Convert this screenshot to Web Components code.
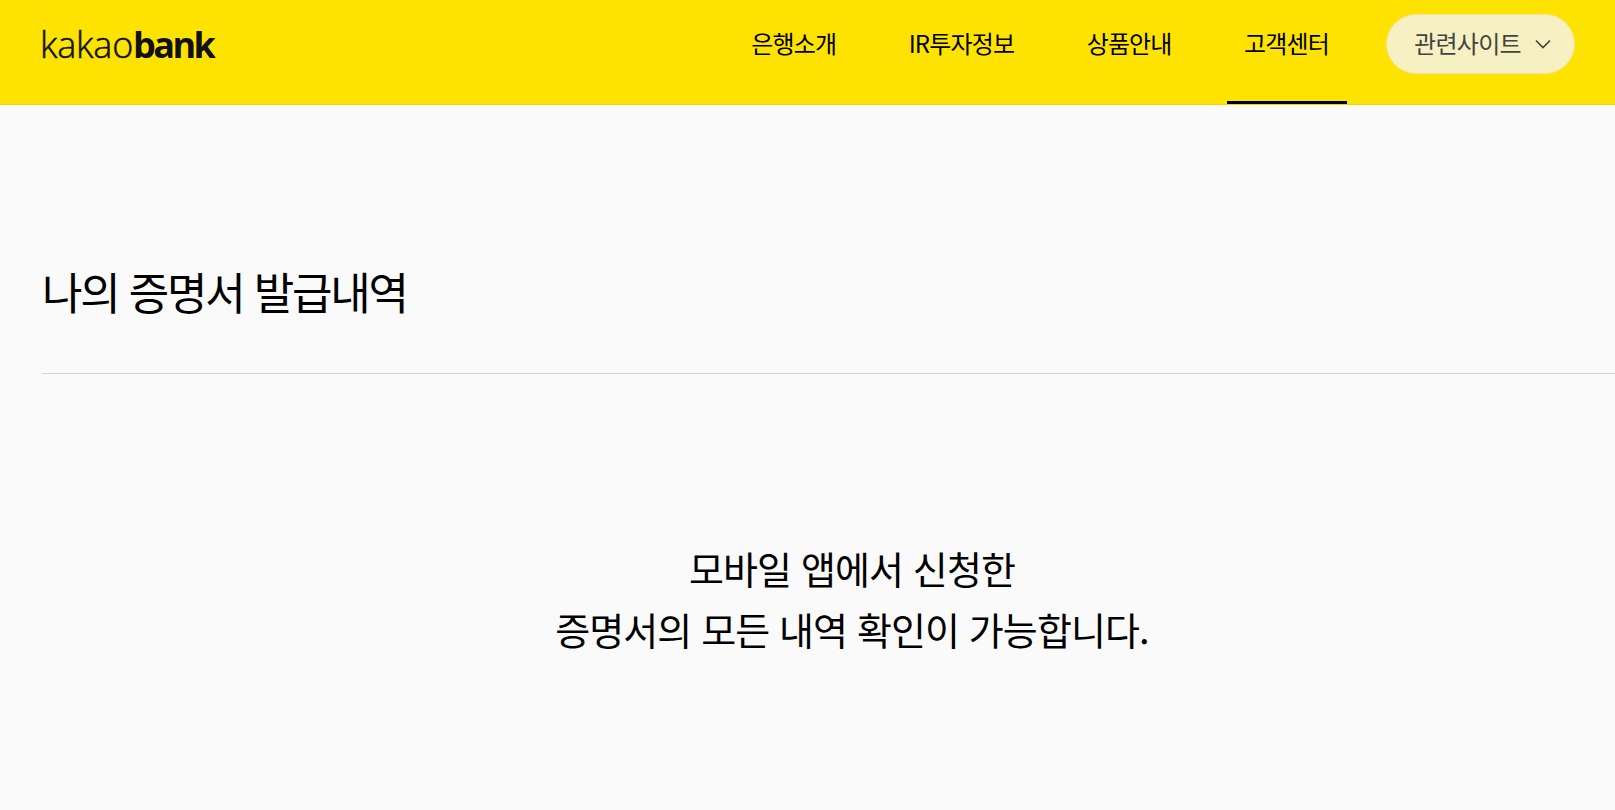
<!DOCTYPE html>
<html lang="ko">
<head>
<meta charset="utf-8">
<title>나의 증명서 발급내역</title>
<style>
  html, body { margin: 0; height: 100%; background: #fafafa; overflow: hidden; }
  body { font-family: "Noto Sans CJK KR", "Noto Sans", sans-serif; color: #000; }
</style>
</head>
<body>
<kb-header>
  <kb-nav-item>은행소개</kb-nav-item>
  <kb-nav-item>IR투자정보</kb-nav-item>
  <kb-nav-item>상품안내</kb-nav-item>
  <kb-nav-item active>고객센터</kb-nav-item>
  <kb-site-select>관련사이트</kb-site-select>
</kb-header>
<kb-page title="나의 증명서 발급내역">
  <kb-empty>
    <span>모바일 앱에서 신청한</span>
    <span>증명서의 모든 내역 확인이 가능합니다.</span>
  </kb-empty>
</kb-page>

<script>
  class KbHeader extends HTMLElement {
    constructor() {
      super();
      this.attachShadow({ mode: "open" });
      this.shadowRoot.innerHTML = `
        <style>
          :host {
            display: flex;
            align-items: flex-start;
            justify-content: space-between;
            box-sizing: border-box;
            height: 105px;
            padding: 0 40px 0 40px;
            background: #ffe300;
            border-bottom: 1px solid #eed600;
          }
          .logo {
            font-family: "Open Sans", sans-serif;
            font-size: 36px;
            line-height: 40px;
            letter-spacing: -0.2px;
            color: #111;
            font-weight: 300;
            -webkit-text-stroke: 0.5px #111;
            margin-top: 25px;
          }
          .logo b { font-weight: 700; letter-spacing: -2.6px; -webkit-text-stroke: 0; }
          nav { display: flex; align-items: flex-start; height: 104px; }
          ::slotted(kb-nav-item) { margin-right: 37.5px; }
          ::slotted(kb-nav-item:nth-last-child(2)) { margin-right: 39px; }
        </style>
        <div class="logo">kakao<b>bank</b></div>
        <nav><slot></slot></nav>
      `;
    }
  }
  customElements.define("kb-header", KbHeader);

  class KbNavItem extends HTMLElement {
    constructor() {
      super();
      this.attachShadow({ mode: "open" });
      this.shadowRoot.innerHTML = `
        <style>
          :host {
            display: flex;
            align-items: center;
            box-sizing: border-box;
            height: 104px;
            padding: 0 18px 16px 17px;
            font-size: 24px;
            letter-spacing: -0.85px;
            color: #000;
            border-bottom: 3px solid transparent;
          }
          :host([active]) { border-bottom-color: #000; }
        </style>
        <slot></slot>
      `;
    }
  }
  customElements.define("kb-nav-item", KbNavItem);

  class KbSiteSelect extends HTMLElement {
    constructor() {
      super();
      this.attachShadow({ mode: "open" });
      this.shadowRoot.innerHTML = `
        <style>
          :host {
            display: flex;
            align-items: center;
            justify-content: space-between;
            box-sizing: border-box;
            width: 189px;
            height: 60px;
            margin-top: 14px;
            padding: 0 23px 0 27px;
            border-radius: 30px;
            background: #f7f0c2;
            border: 1px solid #f0e6a0;
            font-size: 24px;
            letter-spacing: -0.7px;
            color: #444;
          }
          span { margin-top: -3px; }
          svg { display: block; }
        </style>
        <span><slot></slot></span>
        <svg width="16" height="10" viewBox="0 0 16 10" fill="none" stroke="#444" stroke-width="1.6">
          <path d="M1 1.5l7 7 7-7"/>
        </svg>
      `;
    }
  }
  customElements.define("kb-site-select", KbSiteSelect);

  class KbPage extends HTMLElement {
    constructor() {
      super();
      this.attachShadow({ mode: "open" });
      this.shadowRoot.innerHTML = `
        <style>
          :host { display: block; padding-left: 42px; }
          h2 {
            margin: 0;
            padding: 152px 0 48px;
            font-size: 44px;
            line-height: 68px;
            font-weight: 400;
            letter-spacing: -2.2px;
            color: #000;
            border-bottom: 1px solid #d4d4d4;
          }
        </style>
        <h2></h2>
        <slot></slot>
      `;
      this.shadowRoot.querySelector("h2").textContent = this.getAttribute("title");
    }
  }
  customElements.define("kb-page", KbPage);

  class KbEmpty extends HTMLElement {
    constructor() {
      super();
      this.attachShadow({ mode: "open" });
      this.shadowRoot.innerHTML = `
        <style>
          :host {
            display: flex;
            flex-direction: column;
            align-items: center;
            padding-left: 47px;
            padding-top: 163px;
            font-size: 38px;
            line-height: 61px;
            letter-spacing: -0.9px;
            color: #000;
          }
        </style>
        <slot></slot>
      `;
    }
  }
  customElements.define("kb-empty", KbEmpty);
</script>
</body>
</html>
